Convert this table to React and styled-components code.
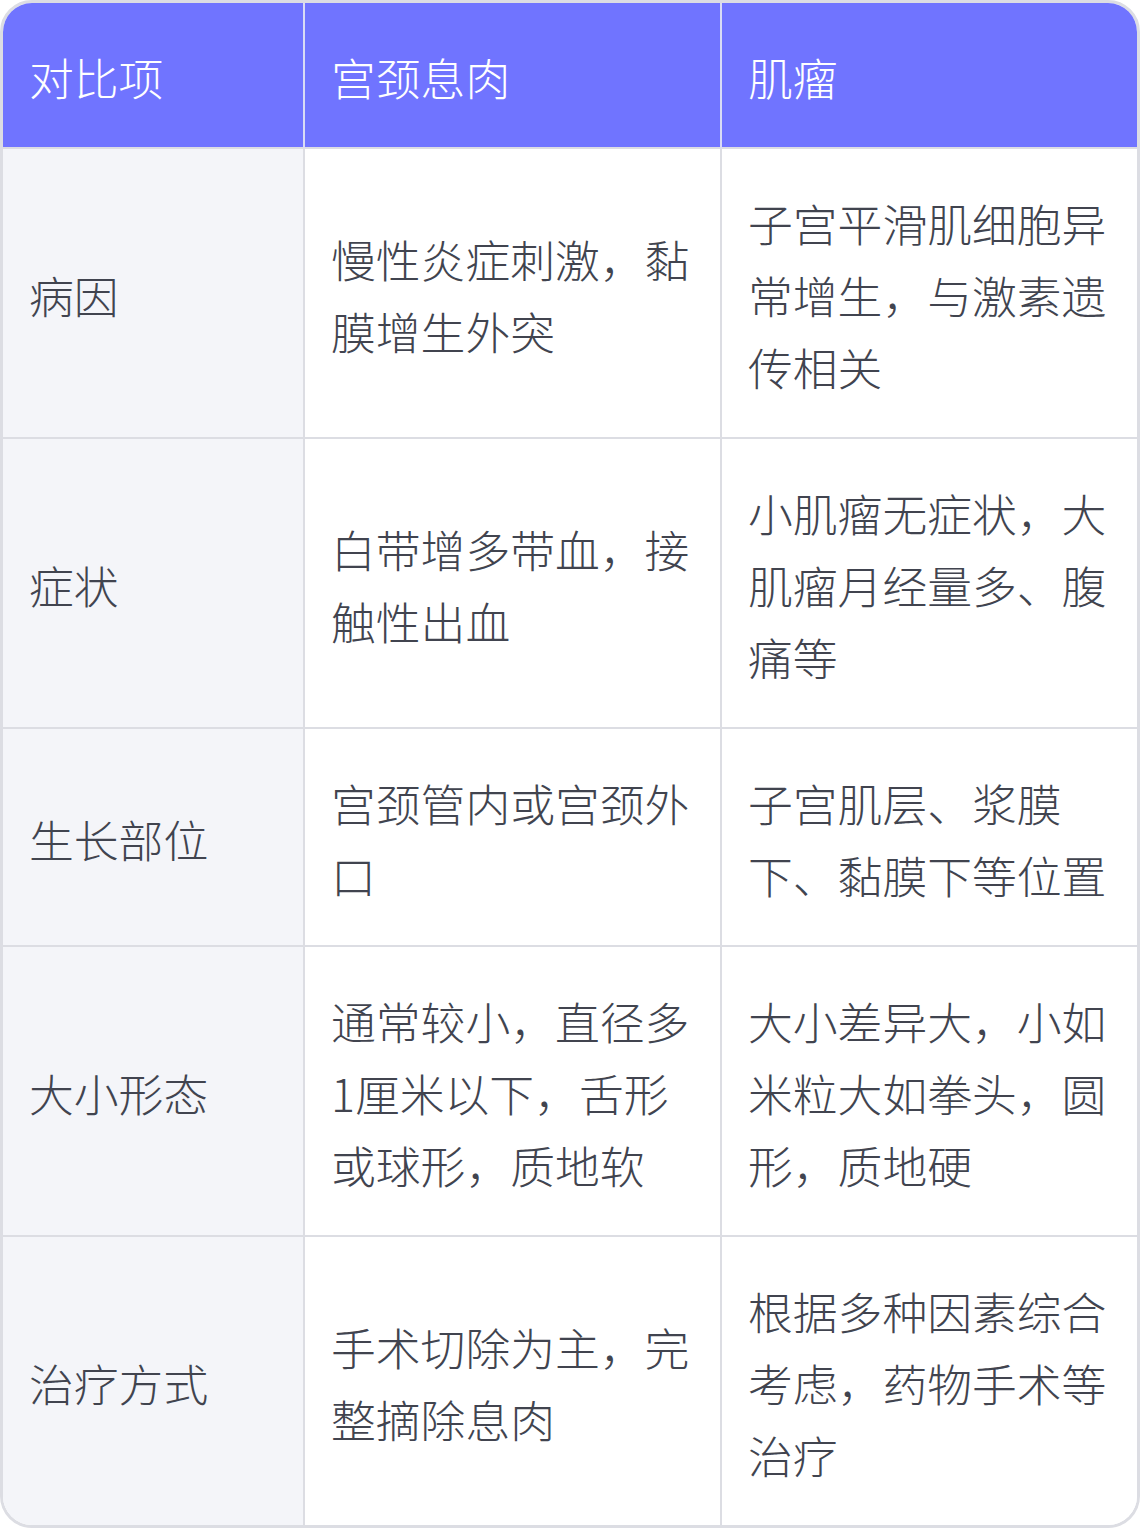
import React from "react";
import styled, { createGlobalStyle } from "styled-components";

const GlobalStyle = createGlobalStyle`
  html, body {
    margin: 0;
    padding: 0;
    background: #ffffff;
  }
  * { box-sizing: border-box; }
`;

const Frame = styled.div`
  width: 1140px;
  border: 3px solid #dcdde3;
  border-radius: 32px;
  overflow: hidden;
  font-family: "Noto Sans CJK SC", "Noto Sans", sans-serif;
  font-weight: 300;
  font-size: 44.8px;
  line-height: 72.1px;
`;

const Grid = styled.div`
  display: grid;
  grid-template-columns: 302px 417px 1fr;
`;

const Cell = styled.div`
  display: flex;
  align-items: center;
  padding: 37.9px 26px 33.9px 26px;
  color: ${(p) => (p.$head ? "#ffffff" : "#41444f")};
  background: ${(p) => (p.$head ? "#7074ff" : p.$first ? "#f4f5f9" : "#ffffff")};
  border-right: ${(p) => (p.$last ? "none" : `2px solid ${p.$head ? "#d9dbf5" : "#dcdde3"}`)};
  border-bottom: ${(p) => (p.$bottom ? "none" : "2px solid #dcdde3")};
`;

const head = ["对比项", "宫颈息肉", "肌瘤"];

const rows = [
  ["病因", "慢性炎症刺激，黏膜增生外突", "子宫平滑肌细胞异常增生，与激素遗传相关"],
  ["症状", "白带增多带血，接触性出血", "小肌瘤无症状，大肌瘤月经量多、腹痛等"],
  ["生长部位", "宫颈管内或宫颈外口", "子宫肌层、浆膜下、黏膜下等位置"],
  ["大小形态", "通常较小，直径多1厘米以下，舌形或球形，质地软", "大小差异大，小如米粒大如拳头，圆形，质地硬"],
  ["治疗方式", "手术切除为主，完整摘除息肉", "根据多种因素综合考虑，药物手术等治疗"],
];

export default function App() {
  return (
    <>
      <GlobalStyle />
      <Frame>
        <Grid>
          {head.map((h, i) => (
            <Cell key={h} $head $last={i === 2}>{h}</Cell>
          ))}
          {rows.map((r, ri) =>
            r.map((c, ci) => (
              <Cell
                key={ri + "-" + ci}
                $first={ci === 0}
                $last={ci === 2}
                $bottom={ri === rows.length - 1}
              >
                {c}
              </Cell>
            ))
          )}
        </Grid>
      </Frame>
    </>
  );
}
